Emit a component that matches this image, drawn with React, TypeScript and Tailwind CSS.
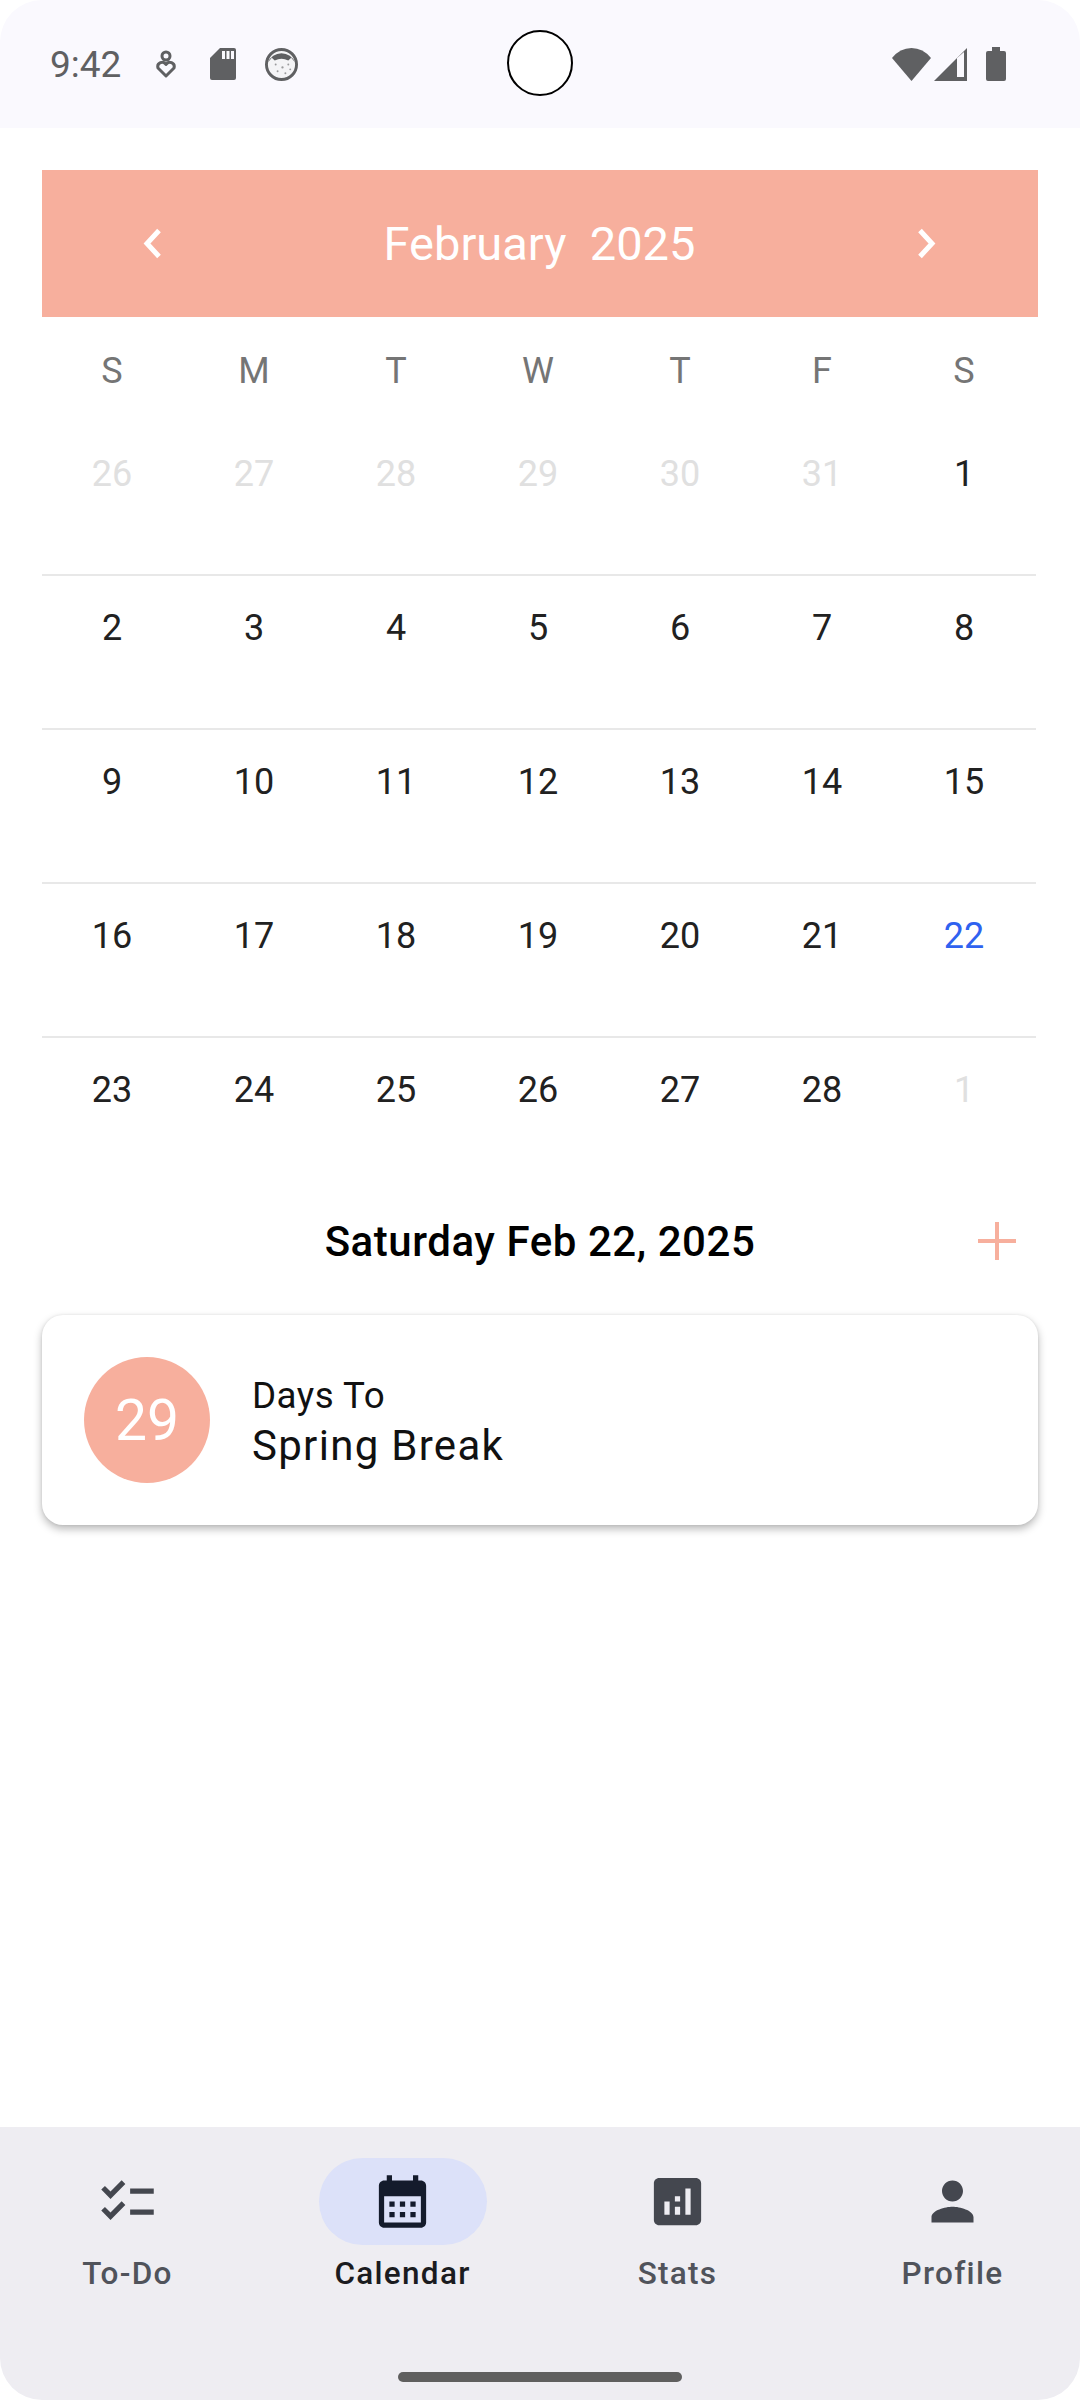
const weekdays = ["S", "M", "T", "W", "T", "F", "S"];
type Day = { n: number; tone?: "muted" | "blue" };
const weeks: Day[][] = [
  [{ n: 26, tone: "muted" }, { n: 27, tone: "muted" }, { n: 28, tone: "muted" }, { n: 29, tone: "muted" }, { n: 30, tone: "muted" }, { n: 31, tone: "muted" }, { n: 1 }],
  [{ n: 2 }, { n: 3 }, { n: 4 }, { n: 5 }, { n: 6 }, { n: 7 }, { n: 8 }],
  [{ n: 9 }, { n: 10 }, { n: 11 }, { n: 12 }, { n: 13 }, { n: 14 }, { n: 15 }],
  [{ n: 16 }, { n: 17 }, { n: 18 }, { n: 19 }, { n: 20 }, { n: 21 }, { n: 22, tone: "blue" }],
  [{ n: 23 }, { n: 24 }, { n: 25 }, { n: 26 }, { n: 27 }, { n: 28 }, { n: 1, tone: "muted" }],
];

const navItems = [
  { label: "To-Do", active: false, d: "M22 7h-9v2h9V7zm0 8h-9v2h9v-2zM5.54 11L2 7.46l1.41-1.41 2.12 2.12 4.24-4.24 1.41 1.41L5.54 11zm0 8L2 15.46l1.41-1.41 2.12 2.12 4.24-4.24 1.41 1.41L5.54 19z" },
  { label: "Calendar", active: true, d: "M19 4h-1V2h-2v2H8V2H6v2H5c-1.1 0-2 .9-2 2v14c0 1.1.9 2 2 2h14c1.1 0 2-.9 2-2V6c0-1.1-.9-2-2-2zm0 16H5V10h14v10zM9 14H7v-2h2v2zm4 0h-2v-2h2v2zm4 0h-2v-2h2v2zm-8 4H7v-2h2v2zm4 0h-2v-2h2v2zm4 0h-2v-2h2v2z" },
  { label: "Stats", active: false, d: "M19 3H5c-1.1 0-2 .9-2 2v14c0 1.1.9 2 2 2h14c1.1 0 2-.9 2-2V5c0-1.1-.9-2-2-2zM9 17H7v-5h2v5zm4 0h-2v-3h2v3zm0-5h-2v-2h2v2zm4 5h-2V7h2v10z" },
  { label: "Profile", active: false, d: "M12 12c2.21 0 4-1.79 4-4s-1.79-4-4-4-4 1.79-4 4 1.79 4 4 4zm0 2c-2.67 0-8 1.34-8 4v2h16v-2c0-2.66-5.33-4-8-4z" },
];

function StatusBar() {
  return (
    <div className="relative h-[128px] shrink-0 rounded-t-[42px] bg-[#faf9fe] flex items-center pl-[50px] pr-[74px] text-[#5f6062]">
      <span className="w-[74px] mr-[31px] text-[37px] leading-[40px] font-normal relative top-[1px]">9:42</span>
      <svg className="w-[22px] h-[28px] mr-[33px]" viewBox="0 0 22 28" fill="none" stroke="currentColor" strokeWidth="3">
        <circle cx="11" cy="6" r="4" />
        <path d="M11 26 L3 18 A4.4 4.4 0 0 1 11 14.5 A4.4 4.4 0 0 1 19 18 Z" strokeLinejoin="round" />
      </svg>
      <svg className="w-[26px] h-[32px] mr-[29px]" viewBox="0 0 26 32" fill="currentColor">
        <path d="M10 0H24a2 2 0 0 1 2 2V30a2 2 0 0 1-2 2H2a2 2 0 0 1-2-2V10Z" />
        <path d="M12 3h3v8h-3zM16.500 3h3v8h-3zM21 3h3v8h-3z" fill="#faf9fe" />
      </svg>
      <svg className="w-[33px] h-[33px]" viewBox="0 0 34 34">
        <circle cx="17" cy="17" r="15.500" fill="#f4f4f6" stroke="currentColor" strokeWidth="3" />
        <path d="M3 15 A15 15 0 0 1 31 15 L27 10 L24 13 Q17 9 10 13 L7 10 Z" fill="currentColor" />
        <g fill="currentColor" opacity="0.6">
          <circle cx="11" cy="17" r="1" /><circle cx="18" cy="20" r="1.200" /><circle cx="24" cy="17" r="1" /><circle cx="13" cy="24" r="1" /><circle cx="21" cy="26" r="1" /><circle cx="26" cy="22" r="1" />
        </g>
      </svg>
      <div className="flex-1" />
      <svg className="w-[39px] h-[33px] mr-[3px]" viewBox="0 0 39 33" fill="currentColor">
        <path d="M19.500 33 L0 10 Q8 0 19.500 0 Q31 0 39 10 Z" />
      </svg>
      <svg className="w-[33px] h-[33px] mr-[19px]" viewBox="0 0 33 33">
        <path d="M0 33 L33 0 V33 Z" fill="currentColor" />
        <path d="M23 10 L30 4 V29 H23 Z" fill="#faf9fe" />
      </svg>
      <svg className="w-[20px] h-[34px]" viewBox="0 0 20 34" fill="currentColor">
        <path d="M6 0h8v4h4a2 2 0 0 1 2 2V32a2 2 0 0 1-2 2H2a2 2 0 0 1-2-2V6a2 2 0 0 1 2-2h4Z" />
      </svg>
      <div className="absolute left-[507px] top-[30px] w-[66px] h-[66px] rounded-full bg-white border-2 border-black" />
    </div>
  );
}

function Calendar() {
  return (
    <section>
      <div className="h-[147px] bg-[#f7af9d] flex items-center justify-between pl-[101px] pr-[102px]">
        <svg className="w-[19px] h-[31px] text-white" viewBox="0 0 19 31" fill="none" stroke="currentColor" strokeWidth="5"><path d="M16 2.500 L4 15.500 L16 28.500" /></svg>
        <span className="text-[47px] leading-[54px] text-white whitespace-pre">February  2025</span>
        <svg className="w-[19px] h-[31px] text-white" viewBox="0 0 19 31" fill="none" stroke="currentColor" strokeWidth="5"><path d="M3 2.500 L15 15.500 L3 28.500" /></svg>
      </div>
      <div className="w-[994px]">
        <div className="grid grid-cols-7 h-[105px] pt-[33px]">
          {weekdays.map((w, i) => (
            <span key={i} className="pr-[2px] text-center text-[36px] leading-[42px] font-normal text-[#757575]">{w}</span>
          ))}
        </div>
        {weeks.map((week, i) => (
          <div key={i} className={`grid grid-cols-7 h-[154px] pt-[31px] ${i < 4 ? "border-b-2 border-[#e8e8e8]" : ""}`}>
            {week.map((d, j) => (
              <span key={j} className={`pr-[2px] text-center text-[36px] leading-[42px] font-normal ${d.tone === "muted" ? "text-[#e0e0e0]" : d.tone === "blue" ? "text-[#2f62f0]" : "text-[#212121]"}`}>{d.n}</span>
            ))}
          </div>
        ))}
      </div>
    </section>
  );
}

export default function App() {
  return (
    <div className="w-[1080px] h-[2400px] bg-white flex flex-col overflow-hidden font-['Roboto',sans-serif]">
      <StatusBar />
      <main className="flex-1 px-[42px] pt-[42px]">
        <Calendar />
        <div className="grid grid-cols-[1fr_auto_1fr] items-center h-[98px] mb-[25px]">
          <span />
          <h2 className="pt-[1px] text-[42px] leading-[48px] font-medium tracking-[0.55px] text-black">Saturday Feb 22, 2025</h2>
          <svg className="justify-self-end mr-[22px] w-[38px] h-[38px] text-[#f7af9d]" viewBox="0 0 38 38" fill="currentColor"><path d="M17 0h4v17h17v4H21v17h-4V21H0v-4h17Z" /></svg>
        </div>
        <div className="h-[210px] rounded-[21px] bg-white flex items-center pl-[42px] gap-[42px] shadow-[0_4px_8px_rgba(0,0,0,0.28),0_0_3px_rgba(0,0,0,0.08)]">
          <div className="w-[126px] h-[126px] rounded-full bg-[#f7af9d] flex items-center justify-center text-white text-[57px] leading-none font-normal">29</div>
          <div className="flex flex-col pt-[6px]">
            <span className="text-[36.750px] leading-[46px] tracking-[0.5px] font-normal text-[#111111]">Days To</span>
            <span className="text-[42px] leading-[54px] tracking-[1.3px] font-normal text-[#111111]">Spring Break</span>
          </div>
        </div>
      </main>
      <nav className="h-[273px] shrink-0 rounded-b-[42px] bg-[#eeedf2] flex flex-col">
        <div className="flex justify-center pt-[31px] flex-1">
          {navItems.map((item) => (
            <div key={item.label} className="w-[275px] shrink-0 flex flex-col items-center">
              <div className={`w-[168px] h-[87px] rounded-full flex items-center justify-center ${item.active ? "bg-[#dce1f9]" : ""}`}>
                <svg className={`w-[63px] h-[63px] ${item.active ? "text-[#141b2c]" : "text-[#44474f]"}`} viewBox="0 0 24 24" fill="currentColor"><path d={item.d} /></svg>
              </div>
              <span className={`mt-[9px] text-[31.500px] leading-[40px] tracking-[1.3px] font-medium ${item.active ? "text-[#1a1b20]" : "text-[#50535b]"}`}>{item.label}</span>
            </div>
          ))}
        </div>
        <div className="h-[10px] w-[284px] mx-auto mb-[18px] rounded-full bg-[#5f5f5f]" />
      </nav>
    </div>
  );
}
